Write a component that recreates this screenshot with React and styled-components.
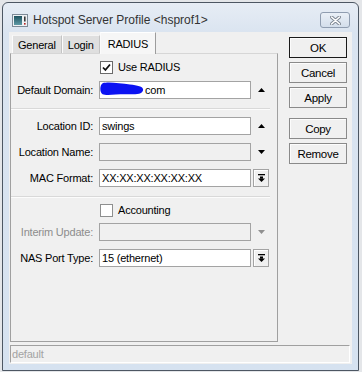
import React from "react";
import styled, { createGlobalStyle } from "styled-components";

const GlobalStyle = createGlobalStyle`
  html, body {
    margin: 0;
    padding: 0;
    background: #e4e6e9;
    font-family: "Liberation Sans", Arial, sans-serif;
  }
`;

const Screen = styled.div`
  width: 362px;
  height: 372px;
  box-sizing: border-box;
  padding: 2px 3px 1px 2px;
`;

const Window = styled.div`
  height: 100%;
  box-sizing: border-box;
  border: 1px solid #4d5763;
  border-radius: 6px 6px 0 0;
  background: linear-gradient(#e7edf5, #dae4f0 30px, #d6e2f0);
  display: flex;
  flex-direction: column;
`;

const TitleBar = styled.div`
  height: 29px;
  box-sizing: border-box;
  padding: 5px 8px 0 9px;
  display: flex;
  align-items: center;
`;

const TitleText = styled.span`
  margin-left: 5px;
  font-size: 12px;
  color: #333;
  white-space: nowrap;
`;

const CloseButton = styled.div`
  margin-left: auto;
  width: 30px;
  height: 16px;
  box-sizing: border-box;
  border: 1px solid #8f9db0;
  border-radius: 3px;
  background: linear-gradient(#eaf0f7, #d3deeb);
  display: flex;
  align-items: center;
  justify-content: center;
`;

const Client = styled.div`
  flex: 1;
  margin: 0 6px 6px 6px;
  background: #f0f0f0;
  display: flex;
  flex-direction: column;
`;

const Main = styled.div`
  display: flex;
`;

const TabArea = styled.div`
  margin-left: 1px;
  width: 268px;
  display: flex;
  flex-direction: column;
`;

const TabStrip = styled.div`
  height: 21px;
  padding-left: 2px;
  display: flex;
  align-items: flex-end;
`;

const Tab = styled.div`
  height: ${(p) => (p.$active ? "21px" : "18px")};
  box-sizing: border-box;
  padding: 0 ${(p) => (p.$active ? "7px" : "5px")};
  display: flex;
  align-items: center;
  font-size: 11px;
  letter-spacing: -0.2px;
  color: #000;
  background: ${(p) => (p.$active ? "#f6f6f6" : "#dfdfdf")};
  border-top: 1px solid ${(p) => (p.$active ? "#fff" : "#f4f4f4")};
  border-left: 1px solid #fbfbfb;
  border-right: 1px solid ${(p) => (p.$active ? "#9c9c9c" : "#c4c4c4")};
  position: relative;
  z-index: 1;
  margin-bottom: ${(p) => (p.$active ? "-1px" : "0")};
  height: ${(p) => (p.$active ? "22px" : "18px")};
`;

const Panel = styled.div`
  height: 289px;
  box-sizing: border-box;
  border: 1px solid #a0a0a0;
  border-top-color: #d6d6d6;
  padding-top: 4px;
  display: flex;
  flex-direction: column;
`;

const Row = styled.div`
  height: 18px;
  margin-top: ${(p) => p.$top}px;
  display: flex;
  align-items: center;
`;

const Label = styled.div`
  width: 82px;
  margin-right: 6px;
  text-align: right;
  font-size: 11px;
  letter-spacing: -0.2px;
  color: ${(p) => (p.$disabled ? "#8d8d8d" : "#000")};
  white-space: nowrap;
`;

const Field = styled.div`
  width: 152px;
  height: 18px;
  box-sizing: border-box;
  border: 1px solid #a3a3a3;
  background: ${(p) => (p.$disabled ? "#f0f0f0" : "#fff")};
  padding-left: 2px;
  display: flex;
  align-items: center;
  font-size: 11px;
  letter-spacing: -0.2px;
  color: #000;
  white-space: nowrap;
  overflow: hidden;
`;

const Side = styled.div`
  width: 16px;
  height: 18px;
  margin-left: 2px;
  box-sizing: border-box;
  display: flex;
  align-items: center;
  justify-content: center;
  ${(p) =>
    p.$boxed &&
    `
    border: 1px solid #a3a3a3;
    background: #f0f0f0;
    box-shadow: inset 1px 1px #fff;
  `}
`;

const CheckRow = styled.div`
  height: 18px;
  margin-top: ${(p) => p.$top}px;
  padding-left: 89px;
  display: flex;
  align-items: center;
  font-size: 11px;
  letter-spacing: -0.2px;
  color: #000;
`;

const Box = styled.div`
  width: 13px;
  height: 13px;
  box-sizing: border-box;
  border: 1px solid ${(p) => (p.$checked ? "#6a6a6a" : "#8e8f8f")};
  background: #fff;
  margin-right: 5px;
  display: flex;
  align-items: center;
  justify-content: center;
`;

const Separator = styled.div`
  margin-top: ${(p) => p.$top}px;
  margin-right: 7px;
  height: 1px;
  background: #d9d9d9;
  border-bottom: 1px solid #fcfcfc;
`;

const ButtonColumn = styled.div`
  margin-left: 11px;
  margin-top: 5px;
  width: 58px;
  display: flex;
  flex-direction: column;
`;

const Button = styled.div`
  height: 21px;
  margin-top: ${(p) => p.$top || 0}px;
  box-sizing: border-box;
  border: 1px solid ${(p) => (p.$default ? "#1a1a1a" : "#8a8a8a")};
  background: #f0f0f0;
  box-shadow: inset 1px 1px #fcfcfc;
  display: flex;
  align-items: center;
  justify-content: center;
  font-size: 11.5px;
  letter-spacing: -0.3px;
  color: #000;
`;

const StatusBar = styled.div`
  margin: 3px 2px 1px 1px;
  height: 18px;
  box-sizing: border-box;
  border: 1px solid #a0a0a0;
  border-right-color: #fff;
  border-bottom-color: #fff;
  padding-left: 1px;
  display: flex;
  align-items: center;
  font-size: 11px;
  letter-spacing: -0.2px;
  color: #a3a3a3;
`;

const AppIcon = () => (
  <svg width="16" height="13" viewBox="0 0 16 13">
    <defs>
      <linearGradient id="ic" x1="0" y1="0" x2="0" y2="1">
        <stop offset="0" stopColor="#1f5360" />
        <stop offset="1" stopColor="#5e9aa6" />
      </linearGradient>
    </defs>
    <rect x="0.5" y="0.5" width="15" height="12" fill="#eef1f4" stroke="#7d8a97" />
    <rect x="2" y="2" width="8" height="9" fill="url(#ic)" />
    <rect x="12" y="2.5" width="1.6" height="5" fill="#3a3a3a" />
    <rect x="12" y="9" width="1.6" height="1.6" fill="#b02020" />
  </svg>
);

const CloseIcon = () => (
  <svg width="11" height="9" viewBox="0 0 11 9">
    <path d="M1.5 1 L9.5 8 M9.5 1 L1.5 8" stroke="#7b8591" strokeWidth="3.4" strokeLinecap="round" />
    <path d="M1.5 1 L9.5 8 M9.5 1 L1.5 8" stroke="#fff" strokeWidth="1.6" strokeLinecap="round" />
  </svg>
);

const Check = () => (
  <svg width="9" height="9" viewBox="0 0 9 9">
    <path d="M1 4.5 L3.4 7 L8 1.5" fill="none" stroke="#111" strokeWidth="1.8" />
  </svg>
);

const Arrow = ({ up, color = "#000" }) => (
  <svg width="7" height="4" viewBox="0 0 7 4">
    <polygon points={up ? "0,4 7,4 3.5,0" : "0,0 7,0 3.5,4"} fill={color} />
  </svg>
);

const DropIcon = () => (
  <svg width="7" height="8" viewBox="0 0 7 8">
    <rect x="0" y="0" width="7" height="1.3" fill="#000" />
    <rect x="2" y="2.5" width="3" height="2.2" fill="#000" />
    <polygon points="0,4.5 7,4.5 3.5,8" fill="#000" />
  </svg>
);

const Scribble = () => (
  <svg width="44" height="14" viewBox="0 0 44 14" style={{ flexShrink: 0, alignSelf: "flex-start", marginTop: "0px" }}>
    <path
      d="M3 1 C8 -0.5 20 1 30 2.5 C38 3.5 44 4.5 43 8.5 C42 12.5 35 12.5 26 12.3 C16 12.2 6 13.8 2.5 12.2 C-0.5 10.5 -0.5 2.5 3 1 Z"
      fill="#0b12f2"
    />
  </svg>
);

export default function App() {
  return (
    <Screen>
      <GlobalStyle />
      <Window>
        <TitleBar>
          <AppIcon />
          <TitleText>Hotspot Server Profile &lt;hsprof1&gt;</TitleText>
          <CloseButton>
            <CloseIcon />
          </CloseButton>
        </TitleBar>
        <Client>
          <Main>
            <TabArea>
              <TabStrip>
                <Tab>General</Tab>
                <Tab>Login</Tab>
                <Tab $active>RADIUS</Tab>
              </TabStrip>
              <Panel>
                <CheckRow $top={0}>
                  <Box $checked>
                    <Check />
                  </Box>
                  Use RADIUS
                </CheckRow>
                <Row $top={5}>
                  <Label>Default Domain:</Label>
                  <Field style={{ paddingLeft: 0 }}>
                    <Scribble />
                    <span style={{ marginLeft: 1 }}>com</span>
                  </Field>
                  <Side>
                    <Arrow up />
                  </Side>
                </Row>
                <Separator $top={9} />
                <Row $top={7}>
                  <Label>Location ID:</Label>
                  <Field>swings</Field>
                  <Side>
                    <Arrow up />
                  </Side>
                </Row>
                <Row $top={8}>
                  <Label>Location Name:</Label>
                  <Field $disabled />
                  <Side>
                    <Arrow />
                  </Side>
                </Row>
                <Row $top={8}>
                  <Label>MAC Format:</Label>
                  <Field>XX:XX:XX:XX:XX:XX</Field>
                  <Side $boxed>
                    <DropIcon />
                  </Side>
                </Row>
                <Separator $top={9} />
                <CheckRow $top={3}>
                  <Box />
                  Accounting
                </CheckRow>
                <Row $top={4}>
                  <Label $disabled>Interim Update:</Label>
                  <Field $disabled />
                  <Side>
                    <Arrow color="#8f8f8f" />
                  </Side>
                </Row>
                <Row $top={8}>
                  <Label>NAS Port Type:</Label>
                  <Field>15 (ethernet)</Field>
                  <Side $boxed>
                    <DropIcon />
                  </Side>
                </Row>
              </Panel>
            </TabArea>
            <ButtonColumn>
              <Button $default>OK</Button>
              <Button $top={4}>Cancel</Button>
              <Button $top={4}>Apply</Button>
              <Button $top={10}>Copy</Button>
              <Button $top={4}>Remove</Button>
            </ButtonColumn>
          </Main>
          <StatusBar>default</StatusBar>
        </Client>
      </Window>
    </Screen>
  );
}
